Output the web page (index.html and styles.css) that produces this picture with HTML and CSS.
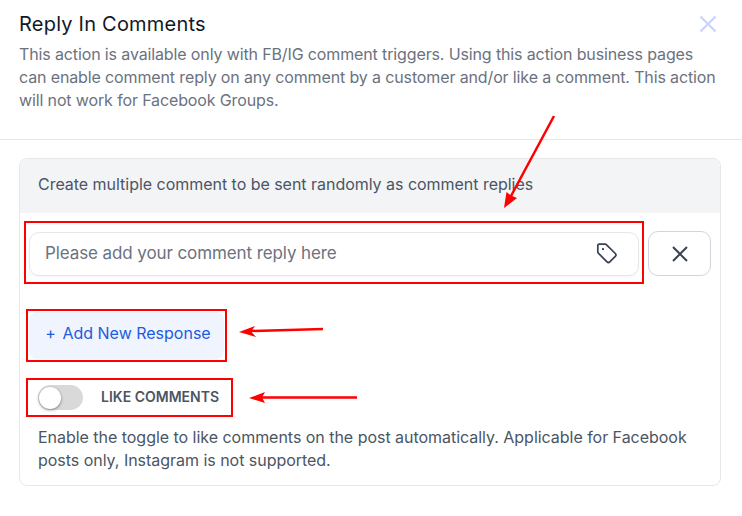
FILE: index.html
```html
<!DOCTYPE html>
<html lang="en">
<head>
    <meta charset="UTF-8">
    <meta name="viewport" content="width=device-width, initial-scale=1.0">
    <title>Reply In Comments</title>
    <link rel="stylesheet" href="styles.css">
</head>
<body>
    <div class="modal">
        <div class="modal-head">
            <div class="title-row">
                <h3>Reply In Comments</h3>
                <button class="modal-close" aria-label="Close">
                    <svg width="18" height="18" viewBox="0 0 18 18"><path d="M1.5 1.5l15 15M16.5 1.5l-15 15"/></svg>
                </button>
            </div>
            <p>This action is available only with FB/IG comment triggers. Using this action business pages can enable comment reply on any comment by a customer and/or like a comment. This action will not work for Facebook Groups.</p>
        </div>
        <div class="card">
            <div class="card-head">Create multiple comment to be sent randomly as comment replies</div>
            <div class="response-row">
                <div class="mark mark-input">
                    <div class="input">
                        <span>Please add your comment reply here</span>
                        <svg width="24" height="24" viewBox="0 0 24 24"><path d="M4 3.2h6.2c.5 0 1 .2 1.4.6l8.7 8.7c.8.8.8 2 0 2.8l-5.5 5.5c-.8.8-2 .8-2.8 0L3.3 12.100c-.3-.3-.5-.8-.5-1.300V4.400C2.800 3.700 3.300 3.200 4 3.200z"/><circle cx="8" cy="8.200" r="1.100" class="dot"/></svg>
                    </div>
                </div>
                <button class="remove" aria-label="Remove">
                    <svg width="18" height="18" viewBox="0 0 18 18"><path d="M2 2l14 14M16 2L2 16"/></svg>
                </button>
            </div>
            <div class="mark mark-add">
                <button class="add-btn"><span class="plus">+</span> Add New Response</button>
            </div>
            <div class="mark mark-like">
                <span class="toggle"><span class="knob"></span></span>
                <span class="like-label">LIKE COMMENTS</span>
            </div>
            <p class="note">Enable the toggle to like comments on the post automatically. Applicable for Facebook posts only, Instagram is not supported.</p>
        </div>
    </div>

    <!-- annotation arrows drawn over the page -->
    <svg class="arrows" width="742" height="516" viewBox="0 0 742 516">
        <path class="line" d="M554 116L511 196M323 329L250 331M357 397.500L258 397.500"/>
        <path class="head" d="M504 208L506.500 192L511 195.500L517 198zM239 332L255 326L251 331.500L256 337zM249 398L265 392L262 397.500L265 403z"/>
    </svg>
</body>
</html>
```

FILE: styles.css
```css
* { box-sizing: border-box; }
body { margin: 0; background: #fff; font-family: Inter, "Liberation Sans", sans-serif; color: #4b5563; }
button { font-family: inherit; cursor: pointer; }

.modal-head { height: 140px; padding: 12px 19px 0; border-bottom: 1px solid #e5e7eb; }
.title-row { display: flex; justify-content: space-between; align-items: center; }
.title-row h3 { margin: 0; font-size: 20px; line-height: 25px; font-weight: 400; letter-spacing: .22px; color: #111827; }
.modal-close { padding: 0; margin: -2px 6px 0 0; border: none; background: none; display: flex; }
.modal-close path { stroke: #c7d2fe; stroke-width: 2; fill: none; }
.modal-head p { margin: 6px 0 0; font-size: 16px; line-height: 23px; letter-spacing: -.13px; color: #6b7280; }

.card { margin: 18px 21px 0 19px; height: 328px; border: 1px solid #e5e7eb; border-radius: 8px; }
.card-head { height: 54px; padding: 0 18px 4px; display: flex; align-items: center; font-size: 16px; letter-spacing: -.03px; background: #f3f4f6; border-radius: 7px 7px 0 0; }

.mark { border: 2px solid #f00; }
.response-row { display: flex; align-items: center; gap: 4px; margin: 8px 0 0 4px; }
.mark-input { width: 620px; height: 63px; padding: 9px 3px 0; }
.input { height: 44px; padding: 0 15px 2px; display: flex; align-items: center; justify-content: space-between; border: 1px solid #e5e7eb; border-radius: 10px; box-shadow: 0 1px 2px rgba(0, 0, 0, .05); font-size: 17px; letter-spacing: -.1px; color: #6b7280; }
.input svg { margin: -1px 4px 0 0; }
.input path { fill: none; stroke: #374151; stroke-width: 1.700; stroke-linejoin: round; }
.input .dot { fill: #374151; }
.remove { width: 63px; height: 45px; padding: 0; display: flex; align-items: center; justify-content: center; background: #fff; border: 1px solid #d1d5db; border-radius: 10px; margin-top: 2px; }
.remove path { stroke: #374151; stroke-width: 2; fill: none; }

.mark-add { width: 201px; height: 53px; margin: 25px 0 0 6px; padding: 1px; }
.add-btn { width: 100%; height: 100%; padding: 0 0 5px 3px; border: none; border-radius: 8px; background: #eff4fe; color: #1d5be0; font-size: 16px; font-weight: 400; }
.add-btn .plus { margin-right: 2px; }

.mark-like { width: 207px; height: 39px; margin: 16px 0 0 6px; padding: 0 10px; display: flex; align-items: center; gap: 18px; }
.toggle { width: 45px; height: 25px; border-radius: 13px; background: #d9d9d9; display: flex; align-items: center; padding-left: 1px; }
.knob { width: 22px; height: 22px; border-radius: 50%; background: #fff; box-shadow: 0 1px 3px rgba(0, 0, 0, .45); }
.like-label { font-size: 14px; font-weight: 600; color: #4b5563; white-space: nowrap; margin-top: -2px; }

.note { margin: 9px 18px 0; font-size: 16px; line-height: 23px; letter-spacing: -.03px; color: #4b5563; }

.arrows { position: absolute; left: 0; top: 0; pointer-events: none; }
.arrows .line { stroke: #f00; stroke-width: 2.500; fill: none; }
.arrows .head { fill: #f00; }
```
